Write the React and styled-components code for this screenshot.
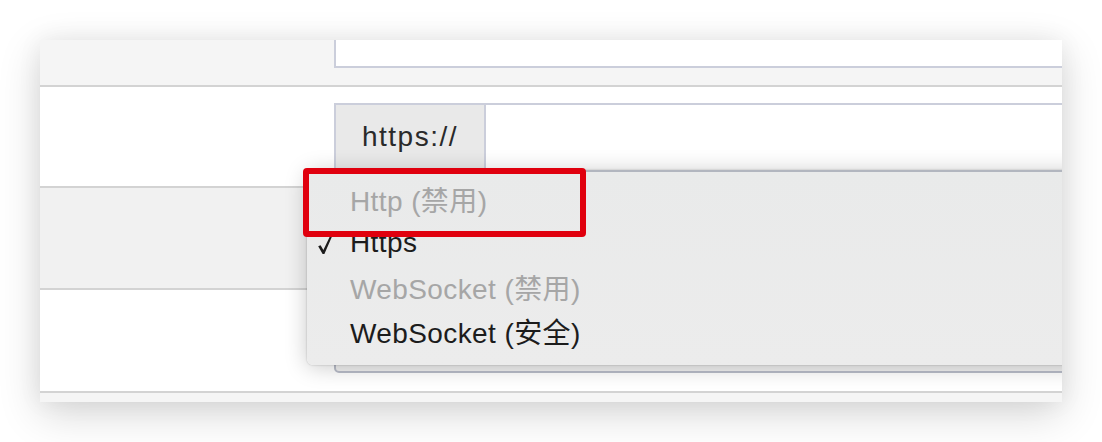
import React from 'react';
import styled, { createGlobalStyle } from 'styled-components';

const GlobalStyle = createGlobalStyle`
  body {
    margin: 0;
    background: #ffffff;
    font-family: "Liberation Sans", Arial, "Noto Sans CJK SC", sans-serif;
  }
`;

const Stage = styled.div`
  padding: 40px 40px 40px 40px;
  width: 1022px;
`;

const Card = styled.div`
  position: relative;
  width: 1022px;
  height: 362px;
  overflow: hidden;
  background: #f5f5f5;
  box-shadow: 0 12px 40px rgba(0, 0, 0, 0.16), 0 0 24px rgba(0, 0, 0, 0.06);
`;

const Row = styled.div`
  display: flex;
  align-items: flex-start;
  height: ${(p) => p.h}px;
  background: ${(p) => (p.gray ? p.gray : '#ffffff')};
  border-bottom: 2px solid #d3d3d3;
  box-sizing: content-box;
`;

const Label = styled.div`
  width: 294px;
  flex: none;
`;

const Field = styled.div`
  flex: 1;
  display: flex;
  margin-right: -20px;
  padding-top: ${(p) => p.top || 0}px;
`;

const CutInput = styled.div`
  flex: 1;
  height: 26px;
  background: #ffffff;
  border-left: 2px solid #cbcedb;
  border-bottom: 2px solid #cbcedb;
`;

const Addon = styled.div`
  width: 152px;
  height: 72px;
  display: flex;
  align-items: flex-start;
  justify-content: center;
  padding-top: 16px;
  box-sizing: border-box;
  background: #e9e9e9;
  border: 2px solid #cbcedb;
  font-size: 28px;
  letter-spacing: 1.5px;
  color: #2a2a2a;
`;

const TextInput = styled.div`
  flex: 1;
  height: 72px;
  box-sizing: border-box;
  background: #ffffff;
  border-top: 2px solid #cbcedb;
`;

const SelectBox = styled.div`
  flex: 1;
  height: 83px;
  box-sizing: border-box;
  background: #f1f1f1;
  border: 2px solid #b9bdc9;
  border-radius: 5px;
`;

const Menu = styled.div`
  position: absolute;
  left: 267px;
  top: 130px;
  right: -30px;
  height: 195px;
  box-sizing: border-box;
  padding: 5px 0 14px;
  background: linear-gradient(#e9eaea, #ececec);
  border-top: 2px solid #b2b6bf;
  border-radius: 6px;
  box-shadow: 0 2px 22px rgba(0, 0, 0, 0.22), 0 0 2px rgba(0, 0, 0, 0.25);
`;

const Item = styled.div`
  position: relative;
  height: 44px;
  display: flex;
  align-items: center;
  padding-left: 43px;
  font-size: 28px;
  letter-spacing: 0.4px;
  color: ${(p) => (p.disabled ? '#a6a6a6' : '#1c1c1c')};
`;

const Check = styled.svg`
  position: absolute;
  left: 10px;
  top: 14px;
  width: 16px;
  height: 20px;
`;

const Highlight = styled.div`
  position: absolute;
  left: 263px;
  top: 128px;
  width: 283px;
  height: 69px;
  box-sizing: border-box;
  border: 6px solid #e0000e;
  border-radius: 4px;
`;

const CheckMark = () => (
  <Check viewBox="0 0 16 20">
    <path
      d="M1.2 11.2 L3.6 10.2 L6.4 15 L13.2 0.8 L15 1.6 L7.4 19 L5.6 19 Z"
      fill="#1c1c1c"
    />
  </Check>
);

const items = [
  { text: 'Http (禁用)', disabled: true },
  { text: 'Https', checked: true },
  { text: 'WebSocket (禁用)', disabled: true },
  { text: 'WebSocket (安全)' },
];

export default function App() {
  return (
    <>
      <GlobalStyle />
      <Stage>
        <Card>
          <Row h={45} gray="#f5f5f5">
            <Label />
            <Field>
              <CutInput />
            </Field>
          </Row>
          <Row h={99}>
            <Label />
            <Field top={16}>
              <Addon>https://</Addon>
              <TextInput />
            </Field>
          </Row>
          <Row h={100} gray="#f1f1f1">
            <Label />
          </Row>
          <Row h={101}>
            <Label />
            <Field top={0}>
              <SelectBox />
            </Field>
          </Row>
          <Row h={20} gray="#f5f5f5" />

          <Menu>
            {items.map((it) => (
              <Item key={it.text} disabled={it.disabled}>
                {it.checked && <CheckMark />}
                {it.text}
              </Item>
            ))}
          </Menu>
          <Highlight />
        </Card>
      </Stage>
    </>
  );
}
